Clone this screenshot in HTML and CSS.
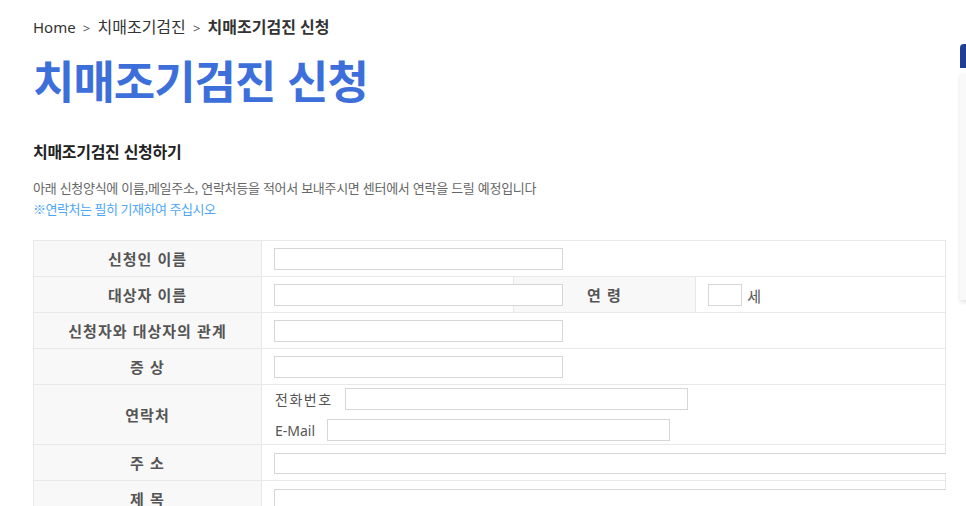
FILE: index.html
```html
<!DOCTYPE html>
<html lang="ko">
<head>
    <meta charset="UTF-8">
    <meta name="viewport" content="width=device-width, initial-scale=1.0">
    <title>치매조기검진 신청</title>
    <link rel="stylesheet" href="styles.css">
</head>
<body>
    <div class="page">
        <div class="breadcrumb">
            <span class="home">Home</span>
            <span class="sep">&gt;</span>
            <span>치매조기검진</span>
            <span class="sep">&gt;</span>
            <strong>치매조기검진 신청</strong>
        </div>

        <h1 class="page-title">치매조기검진 신청</h1>

        <h2 class="section-title">치매조기검진 신청하기</h2>
        <p class="desc">아래 신청양식에 이름,메일주소, 연락처등을 적어서 보내주시면 센터에서 연락을 드릴 예정입니다</p>
        <p class="note">※연락처는 필히 기재하여 주십시오</p>

        <div class="form-wrap">
            <table class="form-table">
                <colgroup>
                    <col class="col-th">
                    <col class="col-td">
                    <col class="col-th2">
                    <col>
                </colgroup>
                <tr>
                    <th>신청인 이름</th>
                    <td colspan="3"><input type="text" class="inp"></td>
                </tr>
                <tr>
                    <th>대상자 이름</th>
                    <td><input type="text" class="inp"></td>
                    <th>연 령</th>
                    <td><input type="text" class="inp-age"> <span class="unit">세</span></td>
                </tr>
                <tr>
                    <th>신청자와 대상자의 관계</th>
                    <td colspan="3"><input type="text" class="inp"></td>
                </tr>
                <tr>
                    <th>증 상</th>
                    <td colspan="3"><input type="text" class="inp"></td>
                </tr>
                <tr class="contact-row">
                    <th>연락처</th>
                    <td colspan="3">
                        <div class="contact-line">
                            <span class="contact-label ko">전화번호</span>
                            <input type="text" class="inp-contact">
                        </div>
                        <div class="contact-line">
                            <span class="contact-label">E-Mail</span>
                            <input type="text" class="inp-contact">
                        </div>
                    </td>
                </tr>
                <tr>
                    <th>주 소</th>
                    <td colspan="3"><input type="text" class="inp-wide"></td>
                </tr>
                <tr>
                    <th>제 목</th>
                    <td colspan="3"><input type="text" class="inp-wide"></td>
                </tr>
            </table>
        </div>
    </div>

    <div class="quick-menu">
        <div class="quick-head"></div>
        <div class="quick-body"></div>
    </div>
</body>
</html>
```

FILE: styles.css
```css
body {
    margin: 0;
    font-family: "Noto Sans", "Noto Sans CJK KR", sans-serif;
    color: #333;
    background-color: #fff;
}

.page {
    width: 913px;
    padding-left: 33px;
}

.breadcrumb {
    padding-top: 15px;
    font-size: 16px;
    line-height: 24px;
    color: #333;
}

.breadcrumb .home {
    font-size: 15px;
}

.breadcrumb .sep {
    font-size: 13px;
    color: #555;
    margin: 0 3px;
}

.breadcrumb strong {
    font-weight: 700;
}

.page-title {
    margin: 14px 0 0;
    font-family: "Noto Sans CJK KR", sans-serif;
    font-size: 45px;
    line-height: 52px;
    font-weight: 700;
    color: #3d6fdb;
    letter-spacing: -1px;
}

.section-title {
    margin: 33px 0 0;
    font-family: "Noto Sans CJK KR", sans-serif;
    font-size: 16px;
    line-height: 24px;
    font-weight: 700;
    color: #222;
    letter-spacing: -0.3px;
}

.desc {
    margin: 15px 0 0;
    font-family: "Noto Sans CJK KR", sans-serif;
    font-size: 13px;
    line-height: 20px;
    color: #666;
    letter-spacing: -0.3px;
}

.note {
    margin: 0;
    font-family: "Noto Sans CJK KR", sans-serif;
    font-size: 13px;
    line-height: 22px;
    color: #4da6f5;
    letter-spacing: -0.5px;
}

.form-wrap {
    margin-top: 20px;
    overflow: hidden;
}

.form-table {
    width: 913px;
    table-layout: fixed;
    border-collapse: collapse;
    border: 1px solid #e6e6e6;
}

.col-th {
    width: 228px;
}

.col-td {
    width: 252px;
}

.col-th2 {
    width: 182px;
}

.form-table th,
.form-table td {
    border: 1px solid #e8e8e8;
    height: 36px;
    padding: 0;
    box-sizing: border-box;
}

.form-table th {
    background-color: #f8f8f8;
    font-family: "Noto Sans CJK KR", sans-serif;
    font-size: 15px;
    font-weight: 700;
    color: #555;
    text-align: center;
    letter-spacing: 1px;
}

.form-table td {
    padding-left: 12px;
    white-space: nowrap;
}

input {
    box-sizing: border-box;
    height: 22px;
    border: 1px solid #d6d6d6;
    background: #fff;
    margin: 0;
    padding: 0 4px;
    vertical-align: middle;
}

.inp {
    width: 289px;
}

.inp-age {
    width: 34px;
}

.unit {
    font-family: "Noto Sans CJK KR", sans-serif;
    font-size: 15px;
    color: #555;
    vertical-align: middle;
    margin-left: 1px;
}

.form-table .contact-row th,
.form-table .contact-row td {
    height: 60px;
}

.contact-line {
    display: flex;
    align-items: center;
    gap: 12px;
    height: 22px;
}

.contact-line + .contact-line {
    margin-top: 9px;
}

.contact-label {
    font-family: "Noto Sans", "Noto Sans CJK KR", sans-serif;
    font-size: 14px;
    color: #555;
    padding-left: 1px;
}

.contact-label.ko {
    letter-spacing: 1.5px;
}

.inp-contact {
    width: 343px;
}

.inp-wide {
    width: 720px;
    height: 21px;
}

.quick-menu {
    position: absolute;
    top: 44px;
    left: 960px;
    width: 100px;
}

.quick-head {
    height: 24px;
    background-color: #1f3f96;
    border-top-left-radius: 4px;
}

.quick-body {
    margin-top: 6px;
    height: 226px;
    background-color: #f9f9f9;
    box-shadow: 0 2px 4px rgba(0, 0, 0, 0.12);
}
```
